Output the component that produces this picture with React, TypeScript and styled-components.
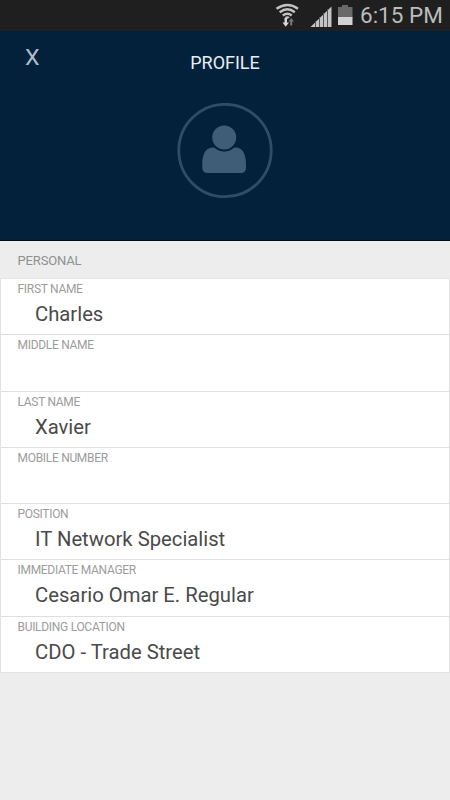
import React from "react";
import styled, { createGlobalStyle } from "styled-components";

const GlobalStyle = createGlobalStyle`
  * { box-sizing: border-box; }
  body { margin: 0; background: #ededed; font-family: Roboto, "Liberation Sans", sans-serif; }
`;

const Screen = styled.main`
  width: 450px;
  height: 800px;
  display: flex;
  flex-direction: column;
  background: #ededed;
  overflow: hidden;
`;

const StatusBar = styled.div`
  height: 31px;
  flex: none;
  display: flex;
  justify-content: flex-end;
  align-items: flex-start;
  padding-right: 8px;
  background: #1f1f1f;
`;

const StatusIcons = styled.svg`
  width: 82px;
  height: 31px;
  display: block;
`;

const Clock = styled.span`
  width: 82px;
  margin-left: 6px;
  color: #bcbcbc;
  font-size: 22.5px;
  line-height: 31px;
  white-space: nowrap;
`;

const Header = styled.header`
  height: 210px;
  flex: none;
  display: grid;
  grid-template-columns: 1fr 1fr 1fr;
  grid-template-rows: 72px 1fr;
  background: #04213b;
  border-bottom: 1px solid #000b18;
`;

const CloseButton = styled.button`
  justify-self: start;
  align-self: start;
  margin: 14px 0 0 25px;
  padding: 0;
  border: 0;
  background: none;
  color: #b0bcc8;
  font: 400 21.5px/26px Roboto, sans-serif;
  transform: scaleX(1.08);
  transform-origin: left;
`;

const Title = styled.h1`
  margin: 21px 0 0;
  text-align: center;
  color: #e6eef5;
  font-size: 18px;
  font-weight: 400;
  line-height: 22px;
`;

const Avatar = styled.svg`
  grid-column: 1 / -1;
  justify-self: center;
  width: 96px;
  height: 96px;
`;

const SectionTitle = styled.h2`
  height: 37px;
  flex: none;
  margin: 0;
  padding-left: 17.5px;
  color: #909090;
  font-size: 13px;
  font-weight: 400;
  letter-spacing: -0.15px;
  line-height: 39px;
`;

const Fields = styled.dl`
  margin: 0;
  flex: none;
  height: 395px;
  border: 1px solid #e2e2e2;
  border-top-color: #e6e6e6;
  background: #fff;
`;

const Row = styled.div`
  height: 56.25px;
  padding-left: 16.5px;
  border-bottom: 1px solid #dfdfdf;
  &:last-child { height: 55px; border-bottom: 0; }
`;

const Label = styled.dt`
  height: 21px;
  color: #9c9c9c;
  font-size: 12px;
  font-weight: 400;
  letter-spacing: -0.3px;
  line-height: 21px;
`;

const Value = styled.dd`
  margin: 0 0 0 17.5px;
  color: #4a4a4a;
  font-size: 20.25px;
  font-weight: 400;
  line-height: 28px;
`;

const fields = [
  { label: "FIRST NAME", value: "Charles" },
  { label: "MIDDLE NAME", value: "" },
  { label: "LAST NAME", value: "Xavier" },
  { label: "MOBILE NUMBER", value: "" },
  { label: "POSITION", value: "IT Network Specialist" },
  { label: "IMMEDIATE MANAGER", value: "Cesario Omar E. Regular" },
  { label: "BUILDING LOCATION", value: "CDO - Trade Street" },
];

export default function App() {
  return (
    <>
      <GlobalStyle />
      <Screen>
        <StatusBar>
          <StatusIcons viewBox="0 0 82 31" aria-hidden="true">
            <g transform="translate(.5 0)">
              <g fill="none" stroke="#c2c2c2" strokeWidth="2.5">
                <path d="M4 8.700Q15 1.200 25.500 8.700" />
                <path d="M7.200 12.200Q15 6.400 22.300 12.200" />
                <path d="M10.300 15.500Q15 12 19.200 15.500" />
              </g>
              <path d="M12.200 17.300Q15 15.300 17.300 17.300L15 19z" fill="#c2c2c2" />
              <path d="M12 18h2.500v4.500h2L13.200 26.700 10 22.500h2z" fill="#d6d6d6" />
              <path d="M17.700 25.500h2v-4h1.800L18.700 18l-2.700 3.500h1.700z" fill="#777" />
            </g>
            <g transform="translate(1.5 0)">
              <path d="M37 27L58 6.500V27z" fill="#c4c4c4" />
              <path d="M42 21v6M46 17v10M50 13v14M54 9v18" stroke="#555" strokeWidth="1" />
              <path d="M64.500 7h4V5h6v2h4.500v11H64.500z" fill="#696969" />
              <path d="M64.500 17H79v8H64.500z" fill="#d2d2d2" />
            </g>
          </StatusIcons>
          <Clock>6:15 PM</Clock>
        </StatusBar>
        <Header>
          <CloseButton aria-label="Close">X</CloseButton>
          <Title>PROFILE</Title>
          <Avatar viewBox="0 0 96 96" aria-hidden="true">
            <circle cx="48" cy="47.500" r="46.200" fill="none" stroke="#304d66" strokeWidth="2.800" />
            <path d="M38 44.500C29 43.500 25.300 50 25.300 61.500V64.500Q25.300 70 31 70H63.500Q69 70 69 64.500V61.500C69 50 65 43.500 57 44.500Q47.500 52 38 44.500z" fill="#405d78" />
            <circle cx="47.200" cy="34.500" r="13" fill="#405d78" stroke="#04213b" strokeWidth="2" />
          </Avatar>
        </Header>
        <SectionTitle>PERSONAL</SectionTitle>
        <Fields>
          {fields.map((f) => (
            <Row key={f.label}>
              <Label>{f.label}</Label>
              <Value>{f.value}</Value>
            </Row>
          ))}
        </Fields>
      </Screen>
    </>
  );
}
